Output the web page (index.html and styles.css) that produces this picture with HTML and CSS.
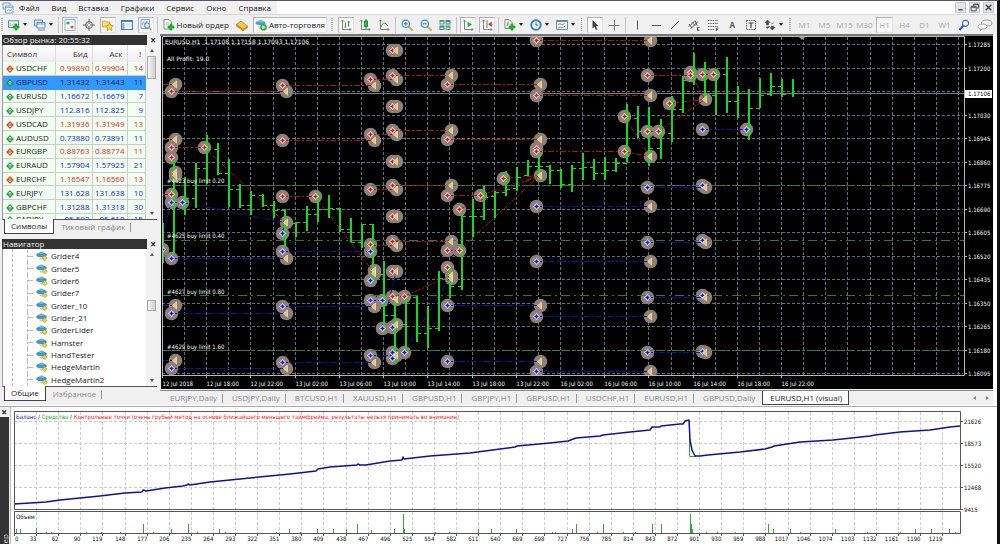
FILE: index.html
```html
<!DOCTYPE html>
<html lang="ru">
<head>
  <meta charset="UTF-8" />
  <meta name="viewport" content="width=device-width, initial-scale=1" />
  <title>EURUSD,H1 (visual)</title>
  <link rel="stylesheet" href="styles.css">
</head>
<body>

  <!-- Shared icons -->
  <svg class="defs" aria-hidden="true">
    <symbol id="plus" viewBox="0 0 8 8"><path d="M3 1h2v2h2v2H5v2H3V5H1V3h2z" fill="#19c41f" stroke="#0b8a12" stroke-width=".6"/></symbol>
    <symbol id="up" viewBox="0 0 8 8"><path d="M4 .5 7.5 4 4 7.500.5 4z" fill="#27a844" stroke="#14762a" stroke-width=".6"/><path d="M4 2v4M2.500 3.500 4 2l1.500 1.500" fill="none" stroke="#dff5df" stroke-width=".8"/></symbol>
    <symbol id="down" viewBox="0 0 8 8"><path d="M4 .5 7.500 4 4 7.500.5 4z" fill="#dd5420" stroke="#a33a12" stroke-width=".6"/><path d="M4 2v4M2.500 4.500 4 6l1.500-1.500" fill="none" stroke="#ffe6d8" stroke-width=".8"/></symbol>
    <symbol id="expert" viewBox="0 0 12 10"><ellipse cx="5.500" cy="4" rx="5" ry="1.900" fill="#3da0d6" stroke="#2278ad" stroke-width=".6"/><path d="M2.800 3.300C3 .2 8 .2 8.200 3.300z" fill="#6cc4ee" stroke="#2278ad" stroke-width=".5"/><path d="M3 5.500c2 2 3 1 4 1.500L6 9 3.500 7.500z" fill="#ecd56a"/><path d="m8.500 4.800 2.800 2.500-2.600 2.500-2.800-2.500z" fill="#f0cf3c" stroke="#b3912a" stroke-width=".6"/></symbol>
    <symbol id="axes" viewBox="0 0 12 12"><path d="M2.500 1v9.500H11M1 2.500 2.500 1 4 2.500M9.500 9 11 10.500 9.500 12" fill="none" stroke="#777" stroke-width=".9"/></symbol>
    <symbol id="lens" viewBox="0 0 12 12"><path d="m7.500 7.500 3.500 3.500" stroke="#d9a93a" stroke-width="2" stroke-linecap="round"/><circle cx="4.800" cy="4.800" r="3.700" fill="#e4f3fd" stroke="#4593cf" stroke-width="1.200"/></symbol>
  </svg>

  <header>
    <div class="menubar">
      <nav class="menu">
        <svg class="icon" viewBox="0 0 12 12"><path d="M1 1h7v6H1z" fill="#e8f3fc" stroke="#6fa5d8"/><path d="M3.500 4h7.500v7H3.500z" fill="#fff" stroke="#6fa5d8"/><path d="M3.500 5.500H11M5 9l1.500-2L8 9l2-2" stroke="#6fa5d8" fill="none" stroke-width=".8"/></svg>
        <a href="#">Файл</a>
        <a href="#">Вид</a>
        <a href="#">Вставка</a>
        <a href="#">Графики</a>
        <a href="#">Сервис</a>
        <a href="#">Окно</a>
        <a href="#">Справка</a>
      </nav>
      <div class="window-buttons">
        <button aria-label="Свернуть"><svg viewBox="0 0 8 8"><path d="M2 6h4" stroke="#444" stroke-width="1.200"/></svg></button>
        <button aria-label="Восстановить"><svg viewBox="0 0 8 8"><path d="M3 3V1h4.500v3.500H6M1 3h4.500v4H1zM1 3.800h4.500M3 1.500h4.500" fill="none" stroke="#444" stroke-width=".8"/></svg></button>
        <button aria-label="Закрыть"><svg viewBox="0 0 8 8"><path d="m1.500 1.500 5 5m0-5-5 5" stroke="#444" stroke-width="1.300"/></svg></button>
      </div>
    </div>

    <div class="toolbar">
      <span class="grip"></span>
      <button class="split" aria-label="Новый график"><svg class="icon" viewBox="0 0 12 12"><path d="M.5 1.500h10v7H.5z" fill="#fff" stroke="#5b8fc4"/><path d="M1 2h9" stroke="#8fbbe4"/><path d="M2 7V4m2 3V5m2 1V3.500" stroke="#6a9a6a" stroke-width=".7"/><use href="#plus" x="4" y="4" width="8" height="8"/></svg><i></i></button>
      <button class="split" aria-label="Профили"><svg class="icon" viewBox="0 0 12 12"><path d="M.5 1h8v6h-8z" fill="#d8e9f8" stroke="#5b8fc4"/><path d="M3 3.500h8v5.500H3z" fill="#fff" stroke="#5b8fc4"/><path d="M3 5h8M4 11h7" stroke="#5b8fc4"/></svg><i></i></button>
      <span class="sep"></span>
      <button class="on" aria-label="Обзор рынка"><svg class="icon" viewBox="0 0 12 12"><path d="M1 .5h10v11H1z" fill="#fff" stroke="#7fb0dd"/><circle cx="4" cy="4" r="1.600" fill="#27a844"/><circle cx="8" cy="8" r="1.600" fill="#e2552b"/><path d="M6 3h3M3 9h2" stroke="#bcd"/></svg></button>
      <button aria-label="Окно данных"><svg class="icon" viewBox="0 0 12 12"><circle cx="6" cy="6" r="3.500" fill="none" stroke="#666"/><path d="M6 0v5M6 7v5M0 6h5M7 6h5" stroke="#666"/></svg></button>
      <button class="on" aria-label="Навигатор"><svg class="icon" viewBox="0 0 12 12"><path d="M.5 2h3l1 1H8v5H.5z" fill="#f5dc85" stroke="#bd9633" stroke-width=".7"/><path d="m7.500 4 1.200 2.500 2.800.3-2 1.900.5 2.800-2.500-1.400L5 11.500l.5-2.800-2-1.900 2.800-.3z" fill="#fbdc3c" stroke="#c08a16" stroke-width=".7"/></svg></button>
      <button aria-label="Терминал"><svg class="icon" viewBox="0 0 12 12"><path d="M.6 1.500h10.800v9H.6z" fill="#fff" stroke="#3f82c4" stroke-width="1.200"/><path d="M1 2.500h10" stroke="#3f82c4"/><path d="M2.500 4v6" stroke="#6ea7dc" stroke-width="2"/><path d="M5 5h5M5 7h5" stroke="#ccd"/></svg></button>
      <button class="on" aria-label="Тестер стратегий"><svg class="icon" viewBox="0 0 12 12"><path d="M1 .5h8.500v9H1z" fill="#e2eff9" stroke="#7fb0dd"/><path d="m2 6 1.500-3L5 6l2-4" fill="none" stroke="#79a" stroke-width=".8"/><circle cx="7" cy="6.500" r="2.600" fill="#d5ecfb" fill-opacity=".8" stroke="#68a"/><path d="m9 8.500 2.500 3" stroke="#d9a93a" stroke-width="1.500"/></svg></button>
      <span class="sep"></span>
      <button class="label"><svg class="icon" viewBox="0 0 12 12"><path d="M1 .5h5l2.500 2.500v7H1z" fill="#fff" stroke="#889"/><path d="M2.500 4h4M2.500 6h3" stroke="#99a" stroke-width=".8"/><use href="#plus" x="4" y="4" width="8" height="8"/></svg>Новый ордер</button>
      <button aria-label="MetaEditor"><svg class="icon" viewBox="0 0 12 12"><path d="M.5 5.500 5 2l6.500 5-4.500 3.500z" fill="#f3c94b" stroke="#a8781c" stroke-width=".7"/><path d="M.5 5.500v1.700l6.500 4.600V10.500zM7 10.500l4.500-3.500v1.500L7 11.800z" fill="#d89c2a" stroke="#a8781c" stroke-width=".5"/></svg></button>
      <button class="label on"><svg class="icon" viewBox="0 0 12 12"><ellipse cx="5.500" cy="4" rx="5" ry="2" fill="#3da0d6"/><path d="M2.500 3.300C2.800 0 8 0 8.300 3.300z" fill="#6cc4ee"/><path d="M2 6c2 2 4 2 6 1L5 11z" fill="#ecd56a"/><circle cx="8.500" cy="8.300" r="3.400" fill="#2ab53a"/><path d="m7.300 6.300 3.300 2-3.300 2z" fill="#fff"/></svg>Авто-торговля</button>

      <span class="grip"></span>
      <button class="on" aria-label="Бары"><svg class="icon" viewBox="0 0 12 12"><use href="#axes"/><path d="M5.500 8.500v-5M8.500 7.500V2M4.500 8h1M8.500 3h1.500" stroke="#1ba32a"/></svg></button>
      <button aria-label="Свечи"><svg class="icon" viewBox="0 0 12 12"><use href="#axes"/><path d="M7 0v10" stroke="#168a22"/><path d="M5.500 2h3v5.500h-3z" fill="#2fcb3f" stroke="#168a22"/></svg></button>
      <button aria-label="Линия"><svg class="icon" viewBox="0 0 12 12"><use href="#axes"/><path d="M3 8c2-5 4-5 7-1" fill="none" stroke="#1ba32a"/></svg></button>
      <span class="sep"></span>
      <button aria-label="Увеличить"><svg class="icon" viewBox="0 0 12 12"><use href="#lens"/><path d="M3 4.800h3.600M4.800 3v3.600" stroke="#2a72b8"/></svg></button>
      <button aria-label="Уменьшить"><svg class="icon" viewBox="0 0 12 12"><use href="#lens"/><path d="M3 4.800h3.600" stroke="#2a72b8"/></svg></button>
      <button aria-label="Окна рядом"><svg class="icon" viewBox="0 0 12 12"><path d="M.5 1h5v4.500h-5zM6.500 6.500h5V11h-5z" fill="#4bb04a"/><path d="M6.500 1h5v4.500h-5zM.5 6.500h5V11h-5z" fill="#3f7fd0"/><path d="M1.500 3h3v1.500h-3zM7.500 3h3v1.500h-3zM1.500 8.500h3V10h-3zM7.500 8.500h3V10h-3z" fill="#eef6ff"/></svg></button>
      <span class="sep"></span>
      <button class="on" aria-label="Автопрокрутка"><svg class="icon" viewBox="0 0 12 12"><use href="#axes"/><path d="m5.500 2.500 4.500 3-4.500 3z" fill="#2bb53a"/></svg></button>
      <button class="on" aria-label="Сдвиг графика"><svg class="icon" viewBox="0 0 12 12"><use href="#axes"/><path d="M6 1v8" stroke="#777"/><path d="m10.500 3-3 2.200 3 2.200zM9 5.200h3" fill="#c8402a" stroke="#c8402a" stroke-width=".6"/></svg></button>
      <span class="sep"></span>
      <button class="split" aria-label="Индикаторы"><svg class="icon" viewBox="0 0 12 12"><path d="M1 .5h4l3 3v6H1z" fill="#fff" stroke="#888"/><path d="M3 7c.5-4 1-4 2-4M3 5h2.500" fill="none" stroke="#666" stroke-width=".8"/><use href="#plus" x="4" y="4" width="8" height="8"/></svg><i></i></button>
      <button class="split" aria-label="Периоды"><svg class="icon" viewBox="0 0 12 12"><circle cx="6" cy="6" r="4.700" fill="#fff" stroke="#2f7ed0" stroke-width="2"/><path d="M6 3.500V6h2" fill="none" stroke="#555"/></svg><i></i></button>
      <button class="split" aria-label="Шаблоны"><svg class="icon" viewBox="0 0 12 12"><path d="M.5 1.500h11v9H.5z" fill="#fff" stroke="#5b8fc4"/><path d="M1 2.500h10" stroke="#5b8fc4"/><path d="m2 6 2-1.500L6 6l3-2" fill="none" stroke="#c8402a" stroke-width=".8"/><path d="M2 9l2-1 2 .8L9.500 7" fill="none" stroke="#1ba32a" stroke-width=".8"/></svg><i></i></button>

      <span class="grip"></span>
      <button class="on" aria-label="Курсор"><svg class="icon" viewBox="0 0 12 12"><path d="M3.500 1v8.500l2-1.800 1.400 3.300 1.500-.7L7 7.200h2.700z" fill="#444"/></svg></button>
      <button aria-label="Перекрестие"><svg class="icon" viewBox="0 0 12 12"><path d="M6.500 1v10.500M1 6.500h10.500" stroke="#777"/></svg></button>
      <span class="sep"></span>
      <button aria-label="Вертикальная линия"><svg class="icon" viewBox="0 0 12 12"><path d="M6.500 1.500v9" stroke="#555"/></svg></button>
      <button aria-label="Горизонтальная линия"><svg class="icon" viewBox="0 0 12 12"><path d="M2 6.500h9" stroke="#555"/></svg></button>
      <button aria-label="Трендовая линия"><svg class="icon" viewBox="0 0 12 12"><path d="m2 10 8-8" stroke="#555"/></svg></button>
      <button aria-label="Канал"><svg class="icon" viewBox="0 0 12 12"><path d="m1 7.500 5-5M3 9.500l7-7M1 5l3 4M4 3.500l3 3M7 1.500l2 5" stroke="#555" fill="none"/><path d="M11.500 8.500h-2v3h2M9.500 10h1.500" fill="none" stroke="#444" stroke-width=".8"/></svg></button>
      <button aria-label="Фибоначчи"><svg class="icon" viewBox="0 0 12 12"><path d="M1 1.500h10M1 4.500h10M1 7.500h10M1 10.500h7" stroke="#666" stroke-dasharray="1.500 .8"/><path d="M9.500 12V9h2M9.500 10.500H11" fill="none" stroke="#444" stroke-width=".8"/></svg></button>
      <button class="letter" aria-label="Текст">A</button>
      <button aria-label="Метка"><svg class="icon" viewBox="0 0 12 12"><path d="M1.500 1.500h9v9h-9z" fill="none" stroke="#666" stroke-dasharray="1.500 .8"/><path d="M3.500 4h5M6 4v5" stroke="#444" stroke-width="1.200"/></svg></button>
      <button class="split" aria-label="Стрелки"><svg class="icon" viewBox="0 0 12 12"><path d="M3.500 1 6 3.500H4.500V6h-2V3.500H1zM8.500 11 6 8.500h1.500V7h2v1.500H11zM2 8l1.500 1.500L6 7M7 5l3-1" fill="#444" stroke="#444" stroke-width=".5"/></svg><i></i></button>

      <span class="grip"></span>
      <button class="tf">M1</button>
      <button class="tf">M5</button>
      <button class="tf">M15</button>
      <button class="tf">M30</button>
      <button class="tf on">H1</button>
      <button class="tf">H4</button>
      <button class="tf">D1</button>
      <button class="tf">W1</button>
      <div class="tools-end">
        <button aria-label="Поиск"><svg class="icon" viewBox="0 0 12 12"><path d="M5.500 6.500 1.500 11" stroke="#2456c8" stroke-width="2"/><circle cx="7.500" cy="4.300" r="3" fill="#fff" stroke="#3c6fdc" stroke-width="1.200"/></svg></button>
        <button aria-label="Чат"><svg class="icon wide" viewBox="0 0 16 12"><path d="M9.500 1c3 0 5.500 1.200 5.500 3S13 7 11 7l-4-.2C5.500 6.500 4.500 5.500 4.500 4c0-1.800 2-3 5-3z" fill="#f4f4f4" stroke="#999"/><path d="M5.500 5C8 5 10 6 10 7.500S8 10 5.500 10L3 11.500 3.300 9.700C2 9.300 1 8.500 1 7.500 1 6 3 5 5.500 5z" fill="#fff" stroke="#999"/></svg></button>
      </div>
    </div>
  </header>

  <main>
    <aside class="dock">
      <section>
        <div class="panel-title"><h2>Обзор рынка: 20:55:32</h2><button aria-label="Закрыть обзор рынка">×</button></div>
        <div class="panel-body market">
          <table>
            <thead><tr><th>Символ</th><th>Бид</th><th>Аск</th><th>!</th></tr></thead>
            <tbody id="quotes"></tbody>
          </table>
          <div class="scrollbar"><i class="arrow-up"></i><b></b><i class="arrow-down"></i></div>
        </div>
        <div class="tabs"><button class="active">Символы</button><button>Тиковый график</button></div>
      </section>

      <section>
        <div class="panel-title"><h2>Навигатор</h2><button aria-label="Закрыть навигатор">×</button></div>
        <div class="panel-body navigator">
          <ul id="experts"></ul>
          <div class="scrollbar middle"><i class="arrow-up"></i><b></b><i class="arrow-down"></i></div>
        </div>
        <div class="tabs"><button class="active">Общие</button><button>Избранное</button></div>
      </section>
    </aside>

    <section class="workspace">
      <svg id="price" viewBox="160 34 833 356" role="img" aria-label="EURUSD,H1"></svg>
      <div class="tabs chart-tabs">
        <button>EURJPY,Daily</button>
        <button>USDJPY,Daily</button>
        <button>BTCUSD,H1</button>
        <button>XAUUSD,H1</button>
        <button>GBPUSD,H1</button>
        <button>GBPJPY,H1</button>
        <button>GBPUSD,H1</button>
        <button>USDCHF,H1</button>
        <button>EURUSD,H1</button>
        <button>GBPUSD,Daily</button>
        <button class="active">EURUSD,H1 (visual)</button>
        <div class="scroll-tabs"><i class="arrow-left"></i><i class="arrow-right"></i></div>
      </div>
    </section>
  </main>

  <section class="tester">
    <div class="tester-side">
      <button aria-label="Закрыть тестер">×</button>
      <span>Тестер</span>
    </div>
    <svg id="balance" viewBox="11 407 986 137" role="img" aria-label="Баланс"></svg>
  </section>

  <script src="charts.js"></script>
</body>
</html>
```

FILE: styles.css
```css
* {
  box-sizing: border-box;
}
body {
  margin: 0;
  min-height: 100vh;
  font-family: "Open Sans", "Noto Sans", sans-serif;
  font-size: 8px;
  line-height: 10px;
  color: #222;
  background: #fff;
  border-top: 1px solid #5a5560;
  border-right: 3px solid #111;
  overflow: hidden;
}
button {
  font: inherit;
  color: inherit;
  border: 1px solid transparent;
  background: none;
  padding: 0;
}
.defs {
  display: none;
}
.icon {
  width: 12px;
  height: 12px;
  flex: none;
}
.icon.wide {
  width: 16px;
}

/* Menu */
.menubar {
  display: flex;
  justify-content: space-between;
  height: 13px;
}
.menu {
  display: flex;
  align-items: center;
  gap: 12px;
  padding: 0 6px 0 2px;
  background: #f1f1f1;
}
.menu .icon {
  margin-right: -7px;
}
.menu a {
  color: #222;
  text-decoration: none;
}
.window-buttons {
  display: flex;
  gap: 3px;
  padding: 1px 3px 0 0;
}
.window-buttons button {
  width: 11px;
  height: 11px;
  display: flex;
  background: #e4e6ea;
  border-color: #c3c6cc;
}

/* Toolbar */
.toolbar {
  display: flex;
  align-items: center;
  gap: 3px;
  height: 20px;
  padding-left: 1px;
  background: #f0f0f0;
  border-top: 1px solid #d8d8d8;
}
.toolbar button {
  flex: none;
  width: 16px;
  height: 16px;
  display: flex;
  align-items: center;
  justify-content: center;
}
.toolbar .on {
  background: #f8f8f8;
  border-color: #b4b4b4 #e4e4e4 #e4e4e4 #b4b4b4;
}
.toolbar .split {
  width: 23px;
  gap: 3px;
}
.split i {
  border: 2px solid transparent;
  border-top: 3px solid #222;
  border-bottom: 0;
}
.toolbar .label {
  width: auto;
  gap: 2px;
  padding: 0 1px;
}
.toolbar .letter {
  font-weight: 700;
  color: #555;
}
.toolbar .tf {
  width: 17px;
  color: #aaa;
}
.grip {
  width: 2px;
  height: 14px;
  background: repeating-linear-gradient(#aaa 0 1px, #f0f0f0 1px 2px);
}
button + .grip {
  margin: 0 2px 0 1px;
}
.sep {
  width: 1px;
  height: 16px;
  background: #c4c4c4;
}
.tools-end {
  display: flex;
  gap: 5px;
  margin-left: auto;
  padding-right: 4px;
}

/* Layout */
main {
  display: grid;
  grid-template-columns: 160px 1fr;
  padding-right: 4px;
  background: linear-gradient(to left, #fff 4px, #f0f0f0 4px);
}
.dock {
  display: flex;
  flex-direction: column;
  gap: 5px;
  padding: 1px 3px 0 2px;
}
.workspace {
  min-width: 0;
}
.workspace svg,
.tester svg {
  display: block;
  width: 100%;
}

/* Dock panels */
.panel-title {
  display: flex;
  height: 10px;
  padding-right: 0;
}
.panel-title h2 {
  flex: 1;
  margin: 0 2px 0 0;
  padding-left: 1px;
  font-size: 8px;
  font-weight: 400;
  line-height: 9px;
  color: #eee;
  background: #333;
}
.panel-title button,
.tester-side button {
  width: 8px;
  height: 10px;
  border: 0;
  font-size: 10px;
  font-weight: 700;
  line-height: 10px;
}
.panel-body {
  display: flex;
  overflow: hidden;
  background: #fff;
  border-left: 1px solid #999;
  border-bottom: 1px solid #555;
}
.market {
  height: 175px;
}
.market table {
  flex: 1;
  height: 183px;
  table-layout: fixed;
  border-collapse: collapse;
}
.market th {
  height: 17px;
  padding: 0 4px 0 0;
  font-weight: 400;
  text-align: right;
  color: #333;
  background: linear-gradient(#fff, #eee);
  border-right: 1px solid #ddd;
}
.market th:first-child {
  width: 52px;
  padding-left: 4px;
  text-align: left;
}
.market th:nth-child(2) {
  width: 37px;
}
.market th:nth-child(3) {
  width: 35px;
}
.market td {
  padding: 0 2px 0 0;
  text-align: right;
  background: #f0fff0;
  border-right: 1px solid #ccc;
  border-bottom: 1px solid #ccc;
}
.market td:first-child {
  text-align: left;
}
.market tr:last-child td {
  vertical-align: top;
}
.market td svg {
  width: 8px;
  height: 8px;
  margin: 0 2px 0 3px;
  vertical-align: -2px;
}
.market .rise {
  color: #2222e0;
}
.market .fall {
  color: #ee2222;
}
.market .selected td {
  color: #0c2550;
  background: #3399ff;
  border-color: #3399ff;
}
.navigator {
  height: 138px;
}
.navigator ul {
  flex: 1;
  display: flex;
  flex-direction: column;
  margin: 0 0 0 9px;
  padding: 1px 0 0 14px;
  list-style: none;
  border-left: 1px dashed #bbb;
}
.navigator li {
  flex: 1;
  display: flex;
  align-items: center;
  gap: 3px;
  border-left: 1px dashed #bbb;
}
.navigator li::before {
  content: "";
  width: 5px;
  border-top: 1px dashed #bbb;
}
.navigator li svg {
  width: 12px;
  height: 10px;
}

/* Scrollbars */
.scrollbar {
  width: 11px;
  display: flex;
  flex-direction: column;
  align-items: center;
  padding: 4px 0;
  background: #f3f3f3;
}
.scrollbar b {
  width: 9px;
  height: 23px;
  margin: 4px 0 auto;
  background: linear-gradient(90deg, #f6f6f6, #cfcfcf);
  border: 1px solid #aaa;
}
.scrollbar.middle b {
  height: 11px;
  margin: 44px 0 auto;
}
.arrow-up {
  border: 2px solid transparent;
  border-bottom: 3px solid #555;
  border-top: 0;
}
.arrow-down {
  border: 2px solid transparent;
  border-top: 3px solid #555;
  border-bottom: 0;
}
.arrow-left {
  border: 2px solid transparent;
  border-right: 3px solid #888;
  border-left: 0;
}
.arrow-right {
  border: 2px solid transparent;
  border-left: 3px solid #888;
  border-right: 0;
}

/* Tabs */
.tabs {
  display: flex;
  height: 14px;
  padding-left: 2px;
  color: #888;
}
.tabs button {
  display: flex;
  align-items: center;
  padding: 0 6px;
  white-space: nowrap;
  background: linear-gradient(#999, #999) right center / 1px 9px no-repeat;
}
.tabs .active {
  color: #222;
  background: #fff;
  border: 1px solid #444;
  border-top: 0;
}
.dock .tabs .active {
  margin-top: -1px;
}
.chart-tabs {
  height: 15px;
  align-items: stretch;
  border-top: 1px solid #888;
}
.chart-tabs button {
  padding: 0 6px 0 7px;
}
.chart-tabs button:nth-last-child(3) {
  background: none;
}
.scroll-tabs {
  display: flex;
  align-items: center;
  gap: 10px;
  margin-left: auto;
  padding-right: 4px;
}

/* Tester */
.tester {
  display: grid;
  grid-template-columns: 11px 1fr;
  border-top: 1px solid #aaa;
  margin-top: 1px;
}
.tester-side {
  display: flex;
  flex-direction: column;
  background: #f0f0f0;
  border-right: 1px solid #bbb;
}
.tester-side span {
  flex: 1;
  width: 9px;
  writing-mode: vertical-rl;
  transform: rotate(180deg);
  line-height: 9px;
  color: #ddd;
  background: #333;
  text-indent: -16px;
  overflow: hidden;
}

/* Charts */
text {
  font-family: "DejaVu Sans Condensed", "DejaVu Sans", sans-serif;
  font-size: 6px;
}
#price text {
  fill: #f4f4f4;
}
#balance text {
  fill: #111;
}
#price .head {
  font-family: "DejaVu Sans", sans-serif;
}
#price .on-badge {
  fill: #000;
}
.grid {
  fill: none;
  stroke: #66707c;
  stroke-dasharray: 3 2;
}
.frame {
  fill: none;
  stroke: #b8b8b8;
}
.bars {
  fill: none;
  stroke: #18d818;
  stroke-width: 2;
}
.ticks {
  fill: none;
  stroke: #18d818;
  stroke-width: 1;
}
.orders {
  fill: none;
  stroke: #2a802a;
  stroke-dasharray: 9 4 2 4;
}
.sell {
  fill: none;
  stroke: #b01010;
  stroke-dasharray: 6 2 2 2;
}
.buy {
  fill: none;
  stroke: #1010b0;
  stroke-dasharray: 6 2 2 2;
}
.halo {
  fill: #8c8078;
}
.light-grid {
  fill: none;
  stroke: #ccc;
  stroke-dasharray: 3 2;
}
.dark-frame {
  fill: none;
  stroke: #555;
}
.balance-line {
  fill: none;
  stroke: #1010a0;
  stroke-width: 1.5;
  stroke-linejoin: round;
}
.green-line {
  fill: none;
  stroke: #2cae2c;
}
#balance .blue {
  fill: #1515c8;
}
#balance .green {
  fill: #1ca31c;
}
#balance .red {
  fill: #f02020;
}
```

FILE: charts.js
```js
// Market watch
const quotes = [
  ['USDCHF', '0.99890', '0.99904', 14, 'fall'],
  ['GBPUSD', '1.31432', '1.31443', 11, 'rise'],
  ['EURUSD', '1.16672', '1.16679', 7, 'rise'],
  ['USDJPY', '112.816', '112.825', 9, 'rise'],
  ['USDCAD', '1.31936', '1.31949', 13, 'fall'],
  ['AUDUSD', '0.73880', '0.73891', 11, 'rise'],
  ['EURGBP', '0.88763', '0.88774', 11, 'fall'],
  ['EURAUD', '1.57904', '1.57925', 21, 'rise'],
  ['EURCHF', '1.16547', '1.16560', 13, 'fall'],
  ['EURJPY', '131.628', '131.638', 10, 'rise'],
  ['GBPCHF', '1.31288', '1.31318', 30, 'rise'],
  ['CADJPY', '85.592', '85.610', 15, 'rise']
];
document.getElementById('quotes').innerHTML = quotes.map(([name, bid, ask, spread, dir]) =>
  `<tr class="${name === 'GBPUSD' ? 'selected' : ''}">
    <td><svg><use href="#${dir === 'rise' ? 'up' : 'down'}"/></svg>${name}</td>
    <td class="${dir}">${bid}</td><td class="${dir}">${ask}</td><td class="${dir}">${spread}</td>
  </tr>`).join('');

// Navigator
const experts = ['Grider4', 'Grider5', 'Grider6', 'Grider7', 'Grider_10', 'Grider_21',
  'GriderLider', 'Hamster', 'HandTester', 'HedgeMartin', 'HedgeMartin2'];
document.getElementById('experts').innerHTML =
  experts.map(name => `<li><svg><use href="#expert"/></svg>${name}</li>`).join('');

const path = (cls, d) => `<path class="${cls}" d="${d}"/>`;
const label = (x, y, str, attrs = '') => `<text x="${x}" y="${y}" ${attrs}>${str}</text>`;
const segments = list => list.map(([x1, y1, x2, y2]) => `M${x1} ${y1}L${x2} ${y2}`).join('');

// Price chart: high, low, open, close for each hour
const hours = [
  [223, 263, 0, 248], [160, 253, 252, 0], [177, 215, 0, 198], [163, 208, 198, 168], [135, 184, 168, 149],
  [143, 175, 149, 173], [159, 207, 173, 189], [184, 208, 189, 205], [191, 215, 205, 195], [194, 207, 195, 205],
  [201, 218, 205, 210], [209, 247, 210, 221], [222, 237, 223, 222], [206, 231, 222, 214], [191, 222, 214, 209],
  [195, 218, 209, 208], [208, 232, 208, 229], [218, 242, 229, 242], [224, 248, 242, 224], [224, 283, 224, 274],
  [261, 328, 274, 315], [300, 363, 315, 325], [300, 350, 324, 298], [296, 342, 297, 333], [306, 348, 333, 328],
  [271, 331, 328, 278], [267, 298, 278, 286], [213, 290, 286, 216], [199, 237, 216, 216], [186, 220, 216, 197],
  [191, 218, 196, 192], [171, 196, 192, 189], [167, 191, 188, 177], [160, 176, 175, 166], [154, 179, 166, 166],
  [165, 184, 166, 170], [169, 188, 170, 184], [165, 192, 184, 168], [153, 180, 168, 167], [159, 180, 167, 173],
  [157, 180, 173, 170], [158, 172, 170, 163], [104, 162, 163, 116], [106, 138, 118, 131], [107, 166, 131, 148],
  [119, 159, 148, 133], [96, 142, 133, 109], [76, 113, 109, 80], [53, 85, 80, 75], [62, 97, 75, 96],
  [69, 115, 95, 74], [57, 113, 74, 101], [86, 118, 101, 93], [89, 140, 93, 108], [78, 108, 108, 95],
  [73, 96, 94, 86], [79, 97, 86, 94], [79, 97, 93, 93]
];
const hourX = i => Math.round(162 + 11.056 * i) + 0.5;

const sells = [
  [162, 84, 175, 84], [171, 91, 286, 91], [162, 139, 175, 139], [171, 147, 204, 147], [204, 147, 285, 222],
  [162, 194, 171, 194], [282, 85, 374, 85], [282, 140, 374, 140], [282, 196, 315, 196], [315, 196, 374, 272],
  [370, 79, 396, 79], [392, 75, 451, 75], [370, 134, 396, 134], [392, 130, 451, 130], [370, 189, 396, 189],
  [392, 185, 451, 185], [370, 245, 396, 245], [392, 241, 451, 241], [392, 296, 404, 296], [404, 296, 451, 275],
  [447, 84, 540, 84], [447, 139, 540, 139], [447, 195, 480, 195], [480, 195, 540, 175], [459, 209, 540, 175],
  [503, 178, 540, 175], [447, 250, 459, 250], [459, 250, 540, 175], [536, 40, 650, 40], [536, 95, 650, 95],
  [536, 151, 624, 151], [624, 151, 650, 156], [624, 116, 650, 156], [647, 75, 690, 75], [647, 131, 658, 131],
  [658, 131, 705, 99], [669, 103, 705, 99], [690, 72, 705, 99], [702, 74, 713, 74]
];
const buys = [
  [162, 240, 171, 202], [171, 202, 182, 202], [182, 202, 285, 222], [171, 258, 286, 258], [282, 251, 370, 251],
  [162, 305, 175, 305], [171, 313, 286, 313], [282, 306, 374, 306], [162, 360, 175, 360], [171, 368, 286, 368],
  [282, 362, 374, 362], [370, 300, 382, 300], [382, 328, 396, 272], [370, 355, 396, 355], [404, 352, 451, 275],
  [447, 305, 540, 305], [447, 361, 540, 361], [536, 206, 650, 206], [536, 261, 650, 261], [536, 316, 650, 316],
  [536, 371, 650, 371], [647, 187, 705, 187], [647, 242, 705, 242], [647, 297, 705, 297], [647, 352, 705, 352],
  [702, 129, 746, 129], [282, 233, 285, 222]
];

// Deal markers by column: s = sell, b = buy, c = close
const deals = {
  162: 'b249',
  171: 's91 s147 s157 s194 b202 b258 b313 b368',
  175: 'c84 c139 c172 c175 c305 c360',
  182: 'b202',
  204: 's147',
  282: 's85 s140 s196 b233 b251 b306 b362',
  286: 'c91 c222 c258 c313 c368',
  315: 's196',
  370: 's79 s134 s189 s244 b251 b280 b300 b355',
  374: 'c85 c140 c270 c273 c306 c362',
  382: 'b300 b328',
  392: 's50 s75 s106 s130 s161 s185 s216 s241 s271 s296 b327 b352 b358',
  396: 'c50 c79 c106 c134 c161 c189 c216 c245 c271 c299 c324 c355',
  404: 's296 b352',
  447: 's84 s139 s195 s250 s267 b305 b361',
  451: 'c75 c130 c185 c241 c275 c278',
  459: 's209 s250',
  480: 's195',
  503: 's178',
  536: 's40 s95 s148 s151 b206 b261 b316 b371',
  540: 'c84 c139 c175 c305 c361',
  624: 's116 s151',
  647: 's75 s131 b187 b242 b297 b352',
  650: 'c40 c95 c156 c206 c261 c316 c371',
  658: 's131',
  669: 's103',
  690: 's72 s75',
  702: 's74 b129 b185 b240 b295 b351',
  705: 'c99 c187 c242 c297 c352',
  713: 's74',
  746: 'b129'
};

let halos = '';
let signs = '';
for (const [col, list] of Object.entries(deals)) {
  const x = Number(col) + 0.5;
  for (const deal of list.split(' ')) {
    const y = Number(deal.slice(1)) + 0.5;
    halos += `<circle class="halo" cx="${x}" cy="${y}" r="6.8"/>`;
    if (deal[0] === 'c') {
      signs += `<path d="M${x - 3} ${y}l4-3.500v7z" fill="#f0c070" stroke="#fff0d0" stroke-width=".6"/>`;
    } else {
      const color = deal[0] === 's' ? '#e01010' : '#1010e0';
      signs += `<path d="M${x - 3.5} ${y}l3.500-3.500 3.500 3.500-3.500 3.500z" fill="#fff" fill-opacity=".85"/>` +
        `<path d="M${x - 2} ${y}h4M${x} ${y - 2}v4" stroke="${color}" stroke-width="1.600"/>`;
    }
  }
}

let gridPath = '';
let priceText = '';
for (let i = 0; i < 15; i++) {
  const y = Math.round(44 + 23.5 * i) + 0.5;
  gridPath += `M162 ${y}H963`;
  const price = (1.17285 - 0.00085 * i).toFixed(5);
  if (i !== 2) priceText += label(968, y + 2, price) + path('frame', `M964 ${y}h3`);
}
for (let i = 2; i < 74; i += 2) {
  gridPath += `M${hourX(i)} 37V375`;
}

const times = ['12 Jul 2018', '12 Jul 18:00', '12 Jul 22:00', '13 Jul 02:00', '13 Jul 06:00', '13 Jul 10:00',
  '13 Jul 14:00', '13 Jul 18:00', '13 Jul 22:00', '16 Jul 02:00', '16 Jul 06:00', '16 Jul 10:00',
  '16 Jul 14:00', '16 Jul 18:00', '16 Jul 22:00'];
times.forEach((time, i) => {
  priceText += label(hourX(i * 4), 386, time) + path('frame', `M${hourX(i * 4)} 375v3`);
});
['#4623 buy limit 0.20', '#4625 buy limit 0.40', '#4627 buy limit 0.80', '#4629 buy limit 1.60'].forEach((order, i) => {
  priceText += label(167, 183 + Math.round(55.3 * i), order);
});

let bars = '';
let ticks = '';
hours.forEach(([high, low, open, close], i) => {
  const x = hourX(i) + 0.5;
  bars += `M${x} ${high}V${low}`;
  if (open) ticks += `M${x - 4} ${open + 0.5}H${x}`;
  if (close) ticks += `M${x} ${close + 0.5}h4`;
});

document.getElementById('price').innerHTML =
  '<rect x="160" y="34" width="833" height="2" fill="#777"/>' +
  '<rect x="161" y="36" width="832" height="353" fill="#000"/>' +
  '<clipPath id="plot"><rect x="162" y="37" width="802" height="338"/></clipPath>' +
  path('grid', gridPath) +
  '<g clip-path="url(#plot)">' +
  halos +
  path('orders', 'M162 185.500H964M162 240.500H964M162 295.500H964M162 350.500H964') +
  '<path d="M162 93.500H964" stroke="#708090"/>' +
  `<g transform="translate(0 .5)">${path('sell', segments(sells))}${path('buy', segments(buys))}</g>` +
  path('bars', bars) + path('ticks', ticks) + signs +
  '<path d="M799 37h6l-3 3z" fill="#999"/></g>' +
  path('frame', 'M162.500 36.500H964.500M162.500 36.500V375.500H964.500V36.500') +
  label(165, 44, 'EURUSD,H1&#160; 1.17108 1.17158 1.17093 1.17106', 'class="head"') +
  label(167, 61, 'All Profit: 19.0', 'class="head"') +
  priceText +
  '<rect x="965" y="90" width="27" height="8" fill="#fff"/>' +
  label(968, 96, '1.17106', 'class="on-badge"');

// Balance graph
const balance = '14,504 30,503 46,502 60,500 80,498 100,496 125,493 142,492 143,490 146,491 165,488 183,486 187,485 ' +
  '188,484 190,485 210,482 250,478 290,474 316,471 318,469 330,467 357,465 358,464 360,465 366,465 390,461 402,460 ' +
  '403,457 404,459 430,456 470,453 500,449 515,447 517,446 550,443 568,441 576,438 600,436 603,435 630,432 ' +
  '650,430 652,427 660,427 661,426 680,424 683,424 685,421 689,420 690,440 692,450 695,456 700,456 708,455 740,452 ' +
  '765,449 772,447 774,446 800,442 833,440 870,436 875,435 900,432 930,430 950,427 960,426';
const volumes = [
  [16, 4], [20, 4], [36, 5], [143, 9], [171, 4], [188, 9], [219, 4], [289, 4], [317, 4], [333, 4], [346, 4],
  [357, 9], [371, 3], [394, 4], [403, 19], [404, 4], [478, 4], [491, 4], [516, 4], [572, 4], [576, 9], [603, 9],
  [652, 9], [661, 9], [690, 19], [691, 9], [692, 4], [768, 9], [773, 4], [790, 4], [835, 4], [915, 4], [931, 4],
  [949, 4], [46, 1], [51, 1], [86, 1], [101, 1], [120, 1], [153, 1], [197, 1], [225, 1], [276, 1], [300, 1],
  [435, 1], [449, 1], [552, 1], [555, 1], [597, 1], [623, 1], [635, 1], [706, 1], [717, 1], [735, 1], [800, 1],
  [867, 1], [900, 1], [955, 1]
];
const trades = [0, 33, 62, 90, 119, 148, 177, 206, 235, 264, 293, 322, 351, 380, 409, 438, 467, 496, 525, 554, 582,
  611, 640, 669, 698, 727, 756, 785, 814, 843, 872, 901, 930, 959, 988, 1017, 1046, 1074, 1103, 1132, 1161, 1190, 1219];

let lightGrid = '';
let balanceText = '';
[21626, 18573, 15520, 12468, 9415].forEach((value, i) => {
  const y = 421.5 + 22 * i;
  if (i < 4) lightGrid += `M14 ${y}H960`;
  balanceText += label(964, y + 2, value) + path('dark-frame', `M960 ${y}h3`);
});
trades.forEach((n, i) => {
  const x = Math.round(14 + 22.1 * i) + 0.5;
  if (i) lightGrid += `M${x} 412V533`;
  balanceText += label(i ? x : x + 4, 541, n, 'text-anchor="end"') + path('dark-frame', `M${x} 533v3`);
});

document.getElementById('balance').innerHTML =
  '<rect x="11" y="407" width="986" height="137" fill="#fff"/>' +
  path('light-grid', lightGrid) +
  path('green-line', volumes.map(([x, h]) => `M${x + 0.5} 533v-${h}`).join('')) +
  path('green-line', 'M689.500 421V456.500H696') +
  `<polyline class="balance-line" points="${balance}"/>` +
  path('dark-frame', 'M14.500 411.500H960.500V509.500H14.500zM14.500 511.500H960.500V533.500H14.500z') +
  label(16, 419, '<tspan class="blue">Баланс</tspan> / <tspan class="green">Средства</tspan> / ' +
    '<tspan class="red">Контрольные точки (очень грубый метод на основе ближайшего меньшего таймфрейма, результаты нельзя принимать во внимание)</tspan>') +
  label(16, 519, 'Объем') +
  balanceText;
```
